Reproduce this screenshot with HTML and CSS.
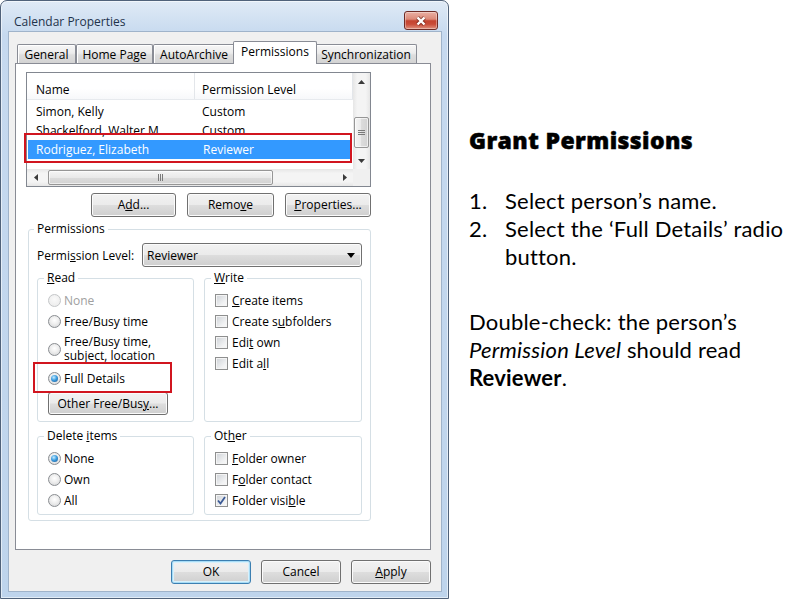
FILE: index.html
```html
<!DOCTYPE html>
<html lang="en">
<head>
<meta charset="utf-8">
<title>Calendar Properties</title>
<link rel="stylesheet" href="styles.css">
</head>
<body>
<div class="page">
  <div class="window">
    <div class="titlebar">
      <span class="title">Calendar Properties</span>
      <span class="close">
        <svg width="14" height="12" viewBox="0 0 14 12"><path d="M3.5 2.5L10.5 9.5M10.5 2.5L3.5 9.5" stroke="#5a1a12" stroke-width="4.2" opacity=".55"/><path d="M3.5 2.5L10.5 9.5M10.5 2.5L3.5 9.5" stroke="#fff" stroke-width="2.4"/></svg>
      </span>
    </div>
    <div class="client">
      <div class="tabs">
        <div class="tab t-general">General</div>
        <div class="tab t-home">Home Page</div>
        <div class="tab t-archive">AutoArchive</div>
        <div class="tab active t-perm">Permissions</div>
        <div class="tab t-sync">Synchronization</div>
      </div>
      <div class="panel">
        <div class="listview">
          <div class="lv-main">
            <div class="lv-header"><div class="c1">Name</div><div class="c2">Permission Level</div></div>
            <div class="lv-rows">
              <div class="lv-row"><div class="c1">Simon, Kelly</div><div class="c2">Custom</div></div>
              <div class="lv-row"><div class="c1">Shackelford, Walter M.</div><div class="c2">Custom</div></div>
              <div class="lv-row selected"><div class="c1">Rodriguez, Elizabeth</div><div class="c2">Reviewer</div></div>
            </div>
          </div>
          <div class="vscroll">
            <span class="arr"><svg width="7" height="4" viewBox="0 0 7 4"><path d="M0 4L3.5 0L7 4Z" fill="#3a3a3a"/></svg></span>
            <span class="thumb-v"><svg width="7" height="7" viewBox="0 0 7 7"><path d="M0 1.5H7M0 3.5H7M0 5.5H7" stroke="#7a7a7a" stroke-width="1"/></svg></span>
            <span class="arr"><svg width="7" height="4" viewBox="0 0 7 4"><path d="M0 0L3.5 4L7 0Z" fill="#3a3a3a"/></svg></span>
          </div>
          <div class="hscroll">
            <span class="arr"><svg width="4" height="7" viewBox="0 0 4 7"><path d="M4 0L0 3.5L4 7Z" fill="#3a3a3a"/></svg></span>
            <span class="thumb-h"><svg width="7" height="7" viewBox="0 0 7 7"><path d="M1.5 0V7M3.5 0V7M5.5 0V7" stroke="#7a7a7a" stroke-width="1"/></svg></span>
            <span class="arr"><svg width="4" height="7" viewBox="0 0 4 7"><path d="M0 0L4 3.5L0 7Z" fill="#3a3a3a"/></svg></span>
          </div>
          <div class="corner"></div>
        </div>

        <div class="btnrow">
          <button class="btn w-add">A<u>d</u>d...</button>
          <button class="btn w-remove">Remo<u>v</u>e</button>
          <button class="btn w-props"><u>P</u>roperties...</button>
        </div>

        <fieldset class="group perms">
          <legend>Permissions</legend>
          <div class="levelrow">
            <span class="levellabel">Permi<u>s</u>sion Level:</span>
            <span class="combo"><span>Reviewer</span><svg width="8" height="5" viewBox="0 0 8 5"><path d="M0 0H8L4 5Z" fill="#000"/></svg></span>
          </div>
          <div class="groups">
            <fieldset class="group sub">
              <legend><u>R</u>ead</legend>
              <div class="items">
                <div class="item disabled"><span class="radio"></span>None</div>
                <div class="item"><span class="radio"></span>Free/Busy time</div>
                <div class="item two"><span class="radio"></span><span>Free/Busy time,<br>subject, location</span></div>
                <div class="item"><span class="radio on"></span>Full Details</div>
                <button class="btn w-other">Other Free/Bus<u>y</u>...</button>
              </div>
            </fieldset>
            <fieldset class="group sub">
              <legend><u>W</u>rite</legend>
              <div class="items">
                <div class="item"><span class="check"></span><span><u>C</u>reate items</span></div>
                <div class="item"><span class="check"></span><span>Create s<u>u</u>bfolders</span></div>
                <div class="item"><span class="check"></span><span>Edi<u>t</u> own</span></div>
                <div class="item"><span class="check"></span><span>Edit a<u>l</u>l</span></div>
              </div>
            </fieldset>
            <fieldset class="group sub low">
              <legend>Delete <u>i</u>tems</legend>
              <div class="items">
                <div class="item"><span class="radio on"></span>None</div>
                <div class="item"><span class="radio"></span>Own</div>
                <div class="item"><span class="radio"></span>All</div>
              </div>
            </fieldset>
            <fieldset class="group sub low">
              <legend>Ot<u>h</u>er</legend>
              <div class="items">
                <div class="item"><span class="check"></span><span><u>F</u>older owner</span></div>
                <div class="item"><span class="check"></span><span>F<u>o</u>lder contact</span></div>
                <div class="item"><span class="check on"><svg width="11" height="11" viewBox="0 0 11 11"><path d="M2 5.5L4.5 8.5L9 2" fill="none" stroke="#3b5a96" stroke-width="1.8"/></svg></span><span>Folder visi<u>b</u>le</span></div>
              </div>
            </fieldset>
          </div>
        </fieldset>
      </div>
      <div class="dlgbtns">
        <button class="btn dlg default">OK</button>
        <button class="btn dlg">Cancel</button>
        <button class="btn dlg"><u>A</u>pply</button>
      </div>
    </div>
  </div>

  <div class="notes">
    <h1>Grant Permissions</h1>
    <ol>
      <li>Select person’s name.</li>
      <li>Select the ‘Full Details’ radio button.</li>
    </ol>
    <p>Double-check: the person’s<br><em>Permission Level</em> should read<br><strong>Reviewer</strong>.</p>
  </div>

  <div class="hl hl-row"></div>
  <div class="hl hl-full"></div>
</div>
</body>
</html>
```

FILE: styles.css
```css
* { box-sizing: border-box; }
html, body { margin: 0; padding: 0; }
body { width: 800px; height: 600px; overflow: hidden; background: #fff; }

.page { position: relative; display: flex; align-items: flex-start; width: 800px; height: 600px; }

/* ---------- window frame ---------- */
.window {
  flex: none;
  width: 449px; height: 599px;
  border: 1px solid #50627a;
  border-radius: 7px 7px 0 0;
  background: linear-gradient(180deg, #e0eaf6 0, #d2e1f2 18px, #c6d9ef 34px, #bed4ec 100%);
  box-shadow: inset 0 0 0 1px rgba(255,255,255,.55);
  display: flex; flex-direction: column;
  font-family: "Open Sans", "Noto Sans", sans-serif;
  font-size: 12px; color: #000;
}
.titlebar {
  flex: none; height: 30px;
  display: flex; justify-content: space-between; align-items: flex-start;
  padding: 0 10px 0 13px;
}
.title { margin-top: 12px; font-size: 12px; line-height: 17px; color: #1e324b; }
.close {
  margin-top: 10px; width: 34px; height: 19px;
  border: 1px solid #6e2b25; border-radius: 3px;
  background: linear-gradient(180deg, #eab0a3 0, #dc8a79 42%, #c4432f 52%, #c94c38 72%, #e0917e 100%);
  box-shadow: inset 0 0 0 1px rgba(255,255,255,.35);
  display: flex; align-items: center; justify-content: center;
}
.client {
  flex: 1;
  margin: 0 6px 6px 7px;
  border: 1px solid #9fb3ca;
  background: #f0f0f0;
  padding: 9px 0 0 6px;
  display: flex; flex-direction: column;
}

/* ---------- tabs ---------- */
.tabs { display: flex; align-items: flex-end; height: 22px; padding-left: 2px; position: relative; z-index: 1; }
.tab {
  flex: none; height: 19px;
  border: 1px solid #898c95; border-bottom: none;
  border-radius: 2px 2px 0 0;
  background: linear-gradient(180deg, #f6f6f6, #ececec 45%, #dedede 55%, #d3d3d3);
  box-shadow: inset 1px 1px 0 #fff;
  text-align: center; line-height: 19px;
}
.tab.active {
  height: 23px; margin: 0 -2px -1px -2px;
  background: #fff; box-shadow: none; line-height: 19px;
  position: relative; z-index: 2;
}
.t-general { width: 59px; }
.t-home { width: 77px; }
.t-archive { width: 82px; }
.t-perm { width: 84px; }
.t-sync { width: 102px; }

/* ---------- panel ---------- */
.panel {
  flex: none;
  width: 416px; height: 487px;
  border: 1px solid #898c95;
  background: #fff;
  padding: 8px 0 0 10px;
  display: flex; flex-direction: column; align-items: flex-start;
}

/* list view */
.listview {
  width: 345px; height: 115px;
  border: 1px solid #828790;
  display: grid; grid-template-columns: 1fr 17px; grid-template-rows: 1fr 17px;
  background: #fff;
}
.lv-main { grid-column: 1; grid-row: 1; overflow: hidden; }
.lv-header {
  display: grid; grid-template-columns: 168px 1fr;
  height: 27px;
  border-bottom: 1px solid #e7eaee;
  background: linear-gradient(#fff, #fff 60%, #f7f8fa);
}
.lv-header > div { padding: 8px 0 0 0; line-height: 18px; border-right: 1px solid #e3e6ea; }
.lv-header .c1 { padding-left: 9px; }
.lv-header .c2 { padding-left: 7px; }
.lv-rows { padding-top: 2px; }
.lv-row { display: grid; grid-template-columns: 168px 1fr; height: 19px; line-height: 19px; }
.lv-row .c1 { padding-left: 9px; white-space: nowrap; }
.lv-row .c2 { padding-left: 7px; }
.lv-row.selected { background: #3399ff; color: #fff; margin: 0 1px; }
.lv-row.selected .c1 { padding-left: 8px; }
.lv-row.selected .c2 { padding-left: 7px; }

.vscroll {
  grid-column: 2; grid-row: 1;
  background: linear-gradient(90deg, #e6e6e6, #f4f4f4 25%, #f4f4f4 75%, #e6e6e6);
  display: flex; flex-direction: column; align-items: center;
}
.vscroll .arr { width: 17px; height: 17px; display: flex; align-items: center; justify-content: center; }
.thumb-v {
  width: 15px; height: 31px; margin: 27px 0 auto;
  border: 1px solid #969696; border-radius: 2px;
  background: linear-gradient(90deg, #f5f5f5, #e9e9e9 50%, #dcdcdc 50%, #d2d2d2);
  box-shadow: inset 0 0 0 1px rgba(255,255,255,.6);
  display: flex; align-items: center; justify-content: center;
}
.hscroll {
  grid-column: 1; grid-row: 2;
  background: linear-gradient(180deg, #e6e6e6, #f4f4f4 25%, #f4f4f4 75%, #e6e6e6);
  display: flex; align-items: center;
}
.hscroll .arr { width: 17px; height: 17px; display: flex; align-items: center; justify-content: center; }
.thumb-h {
  width: 225px; height: 15px; margin: 0 auto 0 4px;
  border: 1px solid #969696; border-radius: 2px;
  background: linear-gradient(180deg, #f5f5f5, #e9e9e9 50%, #dcdcdc 50%, #d2d2d2);
  box-shadow: inset 0 0 0 1px rgba(255,255,255,.6);
  display: flex; align-items: center; justify-content: center;
}
.corner { grid-column: 2; grid-row: 2; background: #f0f0f0; }

/* buttons */
.btn {
  font: inherit; color: #000; padding: 0; margin: 0;
  height: 24px;
  border: 1px solid #707070; border-radius: 3px;
  background: linear-gradient(180deg, #f2f2f2, #ebebeb 48%, #dddddd 52%, #cfcfcf);
  box-shadow: inset 0 0 0 1px #fbfbfb;
  display: flex; align-items: center; justify-content: center;
  line-height: 16px;
}
.btnrow { display: flex; justify-content: flex-end; gap: 11px; width: 345px; margin-top: 6px; }
.w-add { width: 85px; }
.w-remove { width: 87px; }
.w-props { width: 86px; }

/* group boxes */
.group {
  margin: 0; min-width: 0;
  border: 1px solid #d5dfe5; border-radius: 3px;
  padding: 0 8px 5px 8px;
}
.group legend { padding: 0 3px; margin-left: -3px; line-height: 16px; }
.perms { width: 343px; margin: 4px 0 0 2px; }
.levelrow { display: flex; align-items: center; margin-top: 6px; }
.levellabel { width: 105px; }
.combo {
  width: 220px; height: 24px;
  border: 1px solid #707070; border-radius: 3px;
  background: linear-gradient(180deg, #f2f2f2, #ebebeb 48%, #dddddd 52%, #cfcfcf);
  box-shadow: inset 0 0 0 1px #fbfbfb;
  display: flex; align-items: center; justify-content: space-between;
  padding: 0 6px 0 4px;
}
.groups {
  display: grid; grid-template-columns: 157px 158px;
  column-gap: 10px; row-gap: 6px;
  margin-top: 3px;
}
.group.sub { padding: 0 10px 6px 10px; }
.group.sub.low { padding-bottom: 3px; }
.group.sub legend { margin-left: -4px; }
.items { padding-top: 4px; display: flex; flex-direction: column; align-items: flex-start; }
.item { height: 21px; display: flex; align-items: center; gap: 3px; white-space: nowrap; }
.item.two { height: 36px; line-height: 14px; padding: 3px 0 5px; }
.item.disabled { color: #a0a0a0; }
.w-other { width: 120px; height: 23px; margin-top: 3px; }

/* radio / checkbox */
.radio {
  flex: none; width: 13px; height: 13px; border-radius: 50%;
  border: 1px solid #8a8d91;
  background: radial-gradient(circle at 50% 40%, #ffffff 0, #eeeeee 45%, #cfd1d3 100%);
  display: flex; align-items: center; justify-content: center;
}
.item.disabled .radio { border-color: #c4c6c8; background: radial-gradient(circle at 50% 40%, #fafafa, #e9e9e9); }
.radio.on::after {
  content: ""; width: 7px; height: 7px; border-radius: 50%;
  background: radial-gradient(circle at 40% 35%, #c8ecff 0, #3d9ee0 45%, #14508f 100%);
}
.check {
  flex: none; width: 13px; height: 13px;
  border: 1px solid #8e8f8f;
  background: linear-gradient(135deg, #cdd1d6, #f1f2f3 70%, #f8f8f8);
  box-shadow: inset 0 0 0 1px #f4f4f4;
  margin-right: 1px;
  display: flex; align-items: center; justify-content: center;
}

/* dialog buttons */
.dlgbtns { display: flex; justify-content: flex-end; gap: 10px; width: 416px; margin-top: 10px; }
.dlg { width: 80px; height: 24px; }
.dlg.default { border-color: #3c7fb1; box-shadow: inset 0 0 0 1px #a7dcf6, inset 0 0 0 2px #d8f0fb; }

/* ---------- notes ---------- */
.notes {
  flex: none; width: 331px;
  margin-left: 20px; padding-top: 126px;
  font-family: "Lato", "Open Sans", sans-serif;
  font-size: 22px; letter-spacing: 0.2px; line-height: 28px; color: #000;
}
.notes h1 {
  margin: 0; font-family: "Open Sans", "Lato", sans-serif;
  font-size: 23px; line-height: 28px; font-weight: 800; letter-spacing: 0.4px;
  -webkit-text-stroke: 0.5px #000;
}
.notes ol { list-style: none; margin: 33px 0 0; padding: 0; counter-reset: step; }
.notes li { display: flex; counter-increment: step; }
.notes li::before { content: counter(step) "."; flex: none; width: 36px; }
.notes p { margin: 37px 0 0; }
.notes strong { font-weight: 700; }

/* ---------- red highlight overlays ---------- */
.hl { position: absolute; border: 2px solid #d1151f; }
.hl-row { left: 24px; top: 133px; width: 328px; height: 30px; }
.hl-full { left: 33px; top: 362px; width: 139px; height: 31px; }
```
